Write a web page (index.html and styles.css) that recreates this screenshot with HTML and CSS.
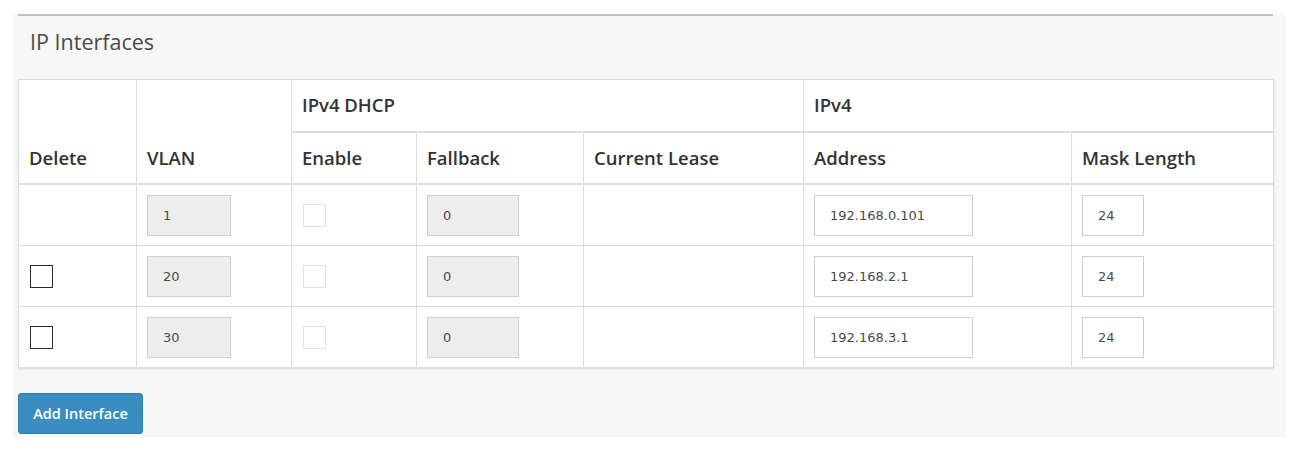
FILE: index.html
```html
<!DOCTYPE html>
<html lang="en">
<head>
<meta charset="utf-8">
<title>IP Interfaces</title>
<link rel="stylesheet" href="styles.css">
</head>
<body>
<div class="panel">
  <div class="panel-head">IP Interfaces</div>
  <table class="grid">
    <colgroup>
      <col class="c-del"><col class="c-vlan"><col class="c-en"><col class="c-fb"><col class="c-lease"><col class="c-addr"><col class="c-mask">
    </colgroup>
    <thead>
      <tr class="r1">
        <th rowspan="2" class="span2">Delete</th>
        <th rowspan="2" class="span2">VLAN</th>
        <th colspan="3">IPv4 DHCP</th>
        <th colspan="2">IPv4</th>
      </tr>
      <tr class="r2">
        <th>Enable</th>
        <th>Fallback</th>
        <th>Current Lease</th>
        <th>Address</th>
        <th>Mask Length</th>
      </tr>
    </thead>
    <tbody>
      <tr>
        <td></td>
        <td><input class="inp w-vlan" value="1" readonly></td>
        <td><input type="checkbox" class="chk off" disabled></td>
        <td><input class="inp w-fb" value="0" readonly></td>
        <td></td>
        <td><input class="inp w-addr edit" value="192.168.0.101"></td>
        <td><input class="inp w-mask edit" value="24"></td>
      </tr>
      <tr>
        <td><input type="checkbox" class="chk"></td>
        <td><input class="inp w-vlan" value="20" readonly></td>
        <td><input type="checkbox" class="chk off" disabled></td>
        <td><input class="inp w-fb" value="0" readonly></td>
        <td></td>
        <td><input class="inp w-addr edit" value="192.168.2.1"></td>
        <td><input class="inp w-mask edit" value="24"></td>
      </tr>
      <tr>
        <td><input type="checkbox" class="chk"></td>
        <td><input class="inp w-vlan" value="30" readonly></td>
        <td><input type="checkbox" class="chk off" disabled></td>
        <td><input class="inp w-fb" value="0" readonly></td>
        <td></td>
        <td><input class="inp w-addr edit" value="192.168.3.1"></td>
        <td><input class="inp w-mask edit" value="24"></td>
      </tr>
    </tbody>
  </table>
  <button class="btn">Add Interface</button>
</div>
</body>
</html>
```
FILE: styles.css
```css
html, body {
  margin: 0;
  padding: 0;
  background: #fff;
}
body {
  padding-top: 14px;
  font-family: "Open Sans", "Liberation Sans", sans-serif;
}
.panel {
  margin-left: 13px;
  width: 1255px;
  padding: 0 12px 3px 5px;
  background: #f7f7f7;
  box-shadow: 1px 0 2px rgba(0,0,0,0.03);
}
.panel-head {
  border-top: 2px solid #c2c2c2;
  padding: 11px 12px 22px;
  font-size: 21.5px;
  line-height: 30px;
  color: #4a4a4a;
}
.grid {
  width: 1255px;
  table-layout: fixed;
  border-collapse: collapse;
  background: #fff;
  border: 1px solid #dedede;
  box-shadow: 0 1px 2px rgba(0,0,0,0.12);
}
.c-del { width: 118px; }
.c-vlan { width: 155px; }
.c-en { width: 125px; }
.c-fb { width: 167px; }
.c-lease { width: 220px; }
.c-addr { width: 268px; }
.c-mask { width: 202px; }
.grid th {
  text-align: left;
  font-size: 18.5px;
  font-weight: 600;
  color: #333;
  line-height: 23px;
  padding: 13px 10px 15px;
  border: 1px solid #dedede;
}
.grid .r1 th {
  border-bottom: 2px solid #dedede;
}
.grid .r2 th {
  padding-top: 13px;
  padding-bottom: 14px;
  border-bottom: 2px solid #dedede;
}
.grid th.span2 {
  vertical-align: bottom;
  padding-bottom: 14px;
}
.grid td {
  border: 1px solid #dedede;
  padding: 10px 10px 9px;
  vertical-align: middle;
}
.inp {
  display: block;
  box-sizing: border-box;
  height: 41px;
  margin: 0;
  padding: 0 15px;
  border: 1px solid #cfcfcf;
  background: #ededed;
  font-family: "DejaVu Sans", sans-serif;
  font-size: 13px;
  color: #4a4a4a;
  outline: none;
}
.inp.edit { background: #fff; }
.w-vlan { width: 84px; }
.w-fb { width: 92px; }
.w-addr { width: 159px; }
.w-mask { width: 62px; }
.chk {
  -webkit-appearance: none;
  appearance: none;
  display: block;
  width: 23px;
  height: 23px;
  margin: 0 0 0 1px;
  box-sizing: border-box;
  border: 1.5px solid #2b2b2b;
  background: #fff;
}
.chk.off {
  border: 1px solid #e2e2e2;
}
.btn {
  display: block;
  margin-top: 25px;
  width: 125px;
  height: 41px;
  background: #3a8dc0;
  border: 1px solid #347fae;
  border-radius: 3px;
  color: #fff;
  font-family: "Open Sans", "Liberation Sans", sans-serif;
  font-size: 14.5px;
  font-weight: 600;
  padding: 0;
}
```
